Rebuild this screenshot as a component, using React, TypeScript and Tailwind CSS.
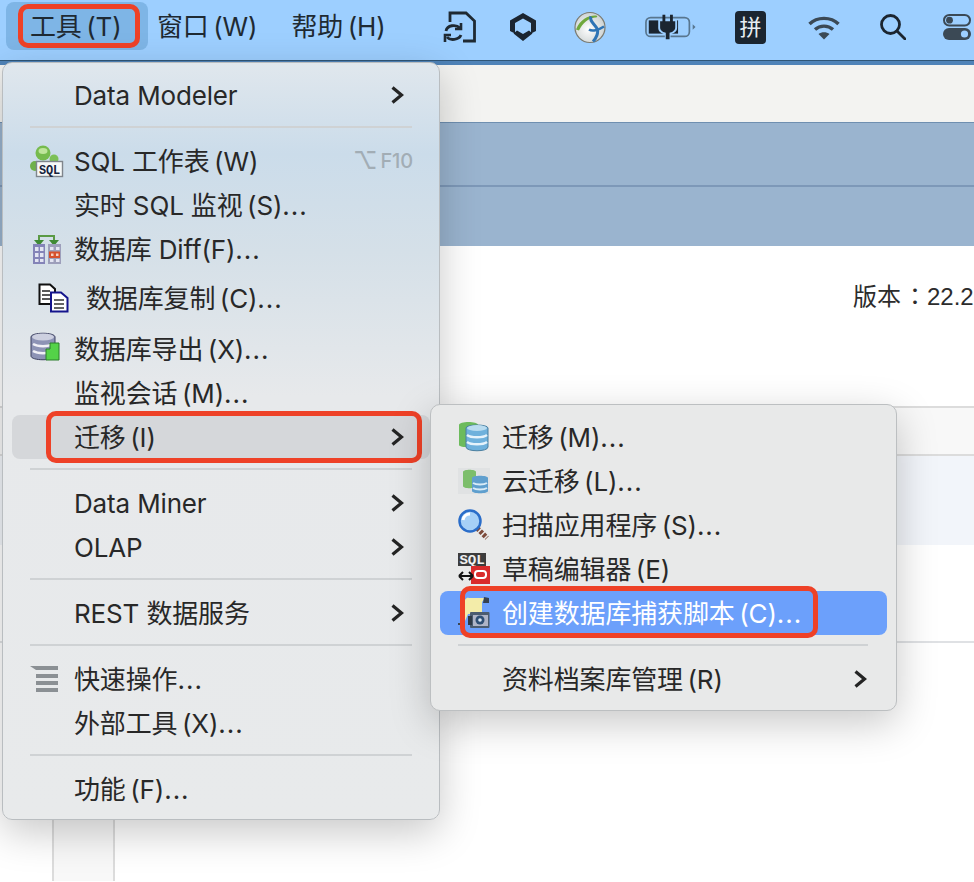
import React from "react";

const font = "font-['Inter','Noto_Sans_CJK_SC',sans-serif]";
const thin = "\u2009";

function Chevron() {
  return (
    <svg width="14" height="20" viewBox="0 0 14 20" fill="none" className="shrink-0">
      <path d="M2.5 2.5 L11.5 10 L2.5 17.5" stroke="#242424" strokeWidth="3.2" strokeLinejoin="miter" />
    </svg>
  );
}

function Sep({ cls }: { cls: string }) {
  return (
    <div className="h-[22px] pt-[9px]">
      <div className={`h-[2px] bg-[#cfd2d4] ${cls}`} />
    </div>
  );
}

function SqlIcon() {
  return (
    <svg width="34" height="34" viewBox="0 0 34 34">
      <circle cx="13" cy="9" r="7.5" fill="#76bb4e" />
      <ellipse cx="13" cy="7" rx="4.5" ry="3" fill="#bfe59c" />
      <circle cx="24" cy="15" r="4.5" fill="#7cc056" />
      <circle cx="5" cy="22" r="5" fill="#6fb04a" />
      <rect x="6.5" y="17.5" width="26" height="15" fill="#f6f8f8" stroke="#7f858c" strokeWidth="1.4" />
      <text x="19.5" y="29.5" fontSize="13" fontWeight="700" fontFamily="Liberation Mono, monospace" textAnchor="middle" fill="#16233c" textLength="21" lengthAdjust="spacingAndGlyphs">SQL</text>
    </svg>
  );
}

function DiffIcon() {
  return (
    <svg width="30" height="32" viewBox="0 0 30 32">
      <path d="M7 8 V3 H22 V8" fill="none" stroke="#5b9a45" strokeWidth="2" />
      <path d="M2 7 H12 L7 13 Z" fill="#3f8a35" />
      <path d="M17 7 H27 L22 13 Z" fill="#3f8a35" />
      <rect x="1" y="11" width="12" height="20" fill="#8484b8" />
      <rect x="16" y="11" width="13" height="20" fill="#9d9fbb" />
      <g fill="#e3e5f2">
        <rect x="3" y="14" width="3.5" height="4" /><rect x="8" y="14" width="3.5" height="4" />
        <rect x="3" y="20" width="3.5" height="4" /><rect x="8" y="20" width="3.5" height="4" />
        <rect x="3" y="26" width="3.5" height="3" /><rect x="8" y="26" width="3.5" height="3" />
        <rect x="18" y="14" width="3.5" height="3" /><rect x="24" y="14" width="3.5" height="3" />
        <rect x="18" y="26" width="3.5" height="3" /><rect x="24" y="26" width="3.5" height="3" />
      </g>
      <rect x="17" y="18.5" width="11" height="6.5" fill="#d6502d" />
      <rect x="19" y="20.5" width="2.5" height="2.5" fill="#f3d0c4" /><rect x="24" y="20.5" width="2.5" height="2.5" fill="#f3d0c4" />
    </svg>
  );
}

function CopyIcon() {
  return (
    <svg width="32" height="30" viewBox="0 0 32 30">
      <path d="M1.5 1.5 H12 L17 6 V21 H1.5 Z" fill="#fff" stroke="#111" strokeWidth="2" />
      <path d="M4 8 H12 M4 12 H12 M4 16 H12" stroke="#222" strokeWidth="1.4" />
      <path d="M13 9.5 H23 L29.5 15 V28.5 H13 Z" fill="#fff" stroke="#14148c" strokeWidth="2" />
      <path d="M16 17 H26 M16 21 H26 M16 25 H26" stroke="#333" strokeWidth="1.4" />
    </svg>
  );
}

function ExportIcon() {
  return (
    <svg width="32" height="32" viewBox="0 0 32 32">
      <path d="M1 5 C1 0 25 0 25 5 V24 C25 29 1 29 1 24 Z" fill="#8d93b5" stroke="#3d4160" strokeWidth="1" />
      <ellipse cx="13" cy="5" rx="11" ry="3.5" fill="#cdd0e0" />
      <path d="M3 12 C8 15 18 15 23 12 M3 19 C8 22 18 22 23 19" stroke="#f0f0f6" strokeWidth="2.5" fill="none" />
      <path d="M16 17 H20 V11 L29 11 V28 H16 Z" fill="#54d348" stroke="#2a7f2a" strokeWidth="1" />
    </svg>
  );
}

function DbIcon({ size }: { size: number }) {
  return (
    <svg width={size} height={size} viewBox="0 0 32 32">
      <path d="M1 4 C1 0 20 0 20 4 V24 C20 27 1 27 1 24 Z" fill="#6cbb5c" />
      <path d="M8 7 C8 3 30 3 30 7 V26 C30 31 8 31 8 26 Z" fill="#6fb1dc" stroke="#4b7f9f" strokeWidth="1" />
      <ellipse cx="19" cy="7" rx="10" ry="3" fill="#b9dcf0" />
      <path d="M9 14 C13 17 25 17 29 14 M9 21 C13 24 25 24 29 21" stroke="#e6f3fb" strokeWidth="2.5" fill="none" />
    </svg>
  );
}

function CloudDbIcon() {
  return (
    <svg width="32" height="26" viewBox="0 0 32 26">
      <rect x="0" y="0" width="32" height="26" fill="#e0e2e3" />
      <path d="M5 4 C5 1 18 1 18 4 V18 C18 21 5 21 5 18 Z" fill="#7cbe6b" />
      <path d="M14 10 C14 7 30 7 30 10 V23 C30 26 14 26 14 23 Z" fill="#5f9fce" />
      <path d="M15 15 C18 17 26 17 29 15 M15 20 C18 22 26 22 29 20" stroke="#d9ecf7" strokeWidth="2" fill="none" />
    </svg>
  );
}

function LensIcon() {
  return (
    <svg width="32" height="32" viewBox="0 0 32 32">
      <path d="M19 19 L29 29" stroke="#7d4a3a" strokeWidth="5" strokeDasharray="3 1.5" strokeLinecap="butt" />
      <circle cx="12" cy="12" r="10.5" fill="#a6d0f7" stroke="#2a6dc9" strokeWidth="2.5" />
      <path d="M5 11 A7 7 0 0 1 12 5" stroke="#fff" strokeWidth="3" fill="none" />
    </svg>
  );
}

function ScratchIcon() {
  return (
    <svg width="32" height="32" viewBox="0 0 32 32">
      <rect x="0" y="0" width="28" height="13" fill="#3d3d3d" />
      <text x="14" y="11" fontSize="12" fontWeight="700" fontFamily="Liberation Mono, monospace" textAnchor="middle" fill="#f0f0f0" textLength="25" lengthAdjust="spacingAndGlyphs">SQL</text>
      <rect x="13" y="13" width="19" height="18" fill="#d92b2b" />
      <rect x="17" y="18" width="11" height="7" rx="3" fill="none" stroke="#fff" strokeWidth="2" />
      <path d="M1 23 H15 M1 23 L5 19 M1 23 L5 27 M15 23 L11 19 M15 23 L11 27" stroke="#111" strokeWidth="2" fill="none" />
    </svg>
  );
}

function CaptureIcon() {
  return (
    <svg width="32" height="32" viewBox="0 0 32 32">
      <path d="M7 3 C9 0 10 1 11 1 H27 L24 5 V17 H10 L7 24 H4 Z" fill="#f3eca9" />
      <path d="M26 0 L31 1 V6 H25 Z" fill="#35414f" />
      <path d="M0 26 H5 V28 H0 Z" fill="#3b4653" />
      <rect x="12" y="15" width="19.5" height="16" rx="1" fill="#4b5c70" />
      <rect x="10" y="19" width="4" height="9" fill="#2f3a47" />
      <rect x="15" y="18" width="15" height="11" fill="#aeb4c6" />
      <circle cx="22" cy="23" r="4.5" fill="#2f4f74" />
      <circle cx="22" cy="23" r="1.8" fill="#d8e6f4" />
    </svg>
  );
}

function QuickIcon() {
  return (
    <svg width="30" height="28" viewBox="0 0 30 28">
      <g fill="#8b9094">
        <path d="M0 1 H28 V5 H6 Z" />
        <rect x="6" y="9" width="22" height="4" />
        <rect x="6" y="16" width="22" height="4" />
        <rect x="6" y="23" width="22" height="4" />
      </g>
    </svg>
  );
}

function FileSync() {
  return (
    <svg width="34" height="32" viewBox="0 0 34 32" fill="none" stroke="#1f2a33" strokeWidth="2.8">
      <path d="M7 11 V2 H23 L31.5 10 V30 H20" />
      <path d="M3 20 C4 14 13 13 17 17" />
      <path d="M18 12 V18 H12" strokeWidth="2.6" />
      <path d="M18 24 C16 29 7 30 4 26" />
      <path d="M2 31 V24 H8" strokeWidth="2.6" />
    </svg>
  );
}

function HexIcon() {
  return (
    <svg width="26" height="28" viewBox="0 0 26 28" fill="#1b2530">
      <path d="M13 0 L26 7.5 V18 L21 20.5 V10 L13 5.5 L5 10 V20.5 L0 18 V7.5 Z" />
      <path d="M7 17.5 L13 21 L19 17.5 L22.5 20.5 L13 28 L3.5 20.5 Z" />
    </svg>
  );
}

function GlobeIcon() {
  return (
    <svg width="32" height="33" viewBox="0 0 32 32">
      <defs>
        <radialGradient id="gl" cx="0.45" cy="0.55" r="0.6">
          <stop offset="0" stopColor="#ffffff" />
          <stop offset="1" stopColor="#c9cfcf" />
        </radialGradient>
      </defs>
      <circle cx="16" cy="16" r="15" fill="url(#gl)" stroke="#7a7a70" strokeWidth="1.2" />
      <path d="M2 18 C6 8 14 4 21 4 C24 4 24 6 21 6 C14 7 9 11 5 19 Z" fill="#6fa83c" />
      <path d="M17 5 C15 9 20 12 23 17 C25 21 22 27 19 30" fill="none" stroke="#2e74b5" strokeWidth="3" />
      <path d="M15 18 C18 20 24 19 30 15" fill="none" stroke="#2e74b5" strokeWidth="2.5" />
    </svg>
  );
}

function BatteryIcon() {
  return (
    <svg width="51" height="26" viewBox="0 0 54 26">
      <rect x="1" y="3" width="46" height="20" rx="5" fill="none" stroke="#58768f" strokeWidth="1.8" />
      <path d="M4 6 H35 V20 H4 Z" fill="#1b2530" />
      <path d="M50.5 10 L53.5 13 L50.5 16 Z" fill="#58768f" />
      <path d="M14 5 H34 V14 C34 18 30 20 27 20.5 V26 H21 V20.5 C18 20 14 18 14 14 Z" fill="#9dcfff" />
      <path d="M16 7 H32 V13.5 C32 17 28 19 26 19 V26 H22 V19 C20 19 16 17 16 13.5 Z" fill="#1b2530" />
      <rect x="18.5" y="0" width="3" height="8" fill="#1b2530" />
      <rect x="26.5" y="0" width="3" height="8" fill="#1b2530" />
    </svg>
  );
}

function WifiIcon() {
  return (
    <svg width="32" height="25" viewBox="0 0 32 25" fill="none" stroke="#3b4955" strokeWidth="3.4">
      <path d="M1.5 9 C9 1.5 23 1.5 30.5 9" />
      <path d="M7 14.5 C12 10 20 10 25 14.5" />
      <path d="M16 24.5 L10.5 19 C13.5 16.8 18.5 16.8 21.5 19 Z" fill="#3b4955" stroke="none" />
    </svg>
  );
}

function SearchIcon() {
  return (
    <svg width="26" height="26" viewBox="0 0 26 26" fill="none" stroke="#1b2530" strokeWidth="2.8">
      <circle cx="10.5" cy="10.5" r="9" />
      <path d="M17 17 L25 25" strokeLinecap="round" />
    </svg>
  );
}

function ToggleIcon() {
  return (
    <svg width="28" height="26" viewBox="0 0 28 26">
      <rect x="1" y="1" width="26" height="10.5" rx="5.25" fill="none" stroke="#3b4955" strokeWidth="2" />
      <circle cx="6.5" cy="6.2" r="3.4" fill="#3b4955" />
      <rect x="0" y="14" width="28" height="12" rx="6" fill="#3b4955" />
      <circle cx="21.5" cy="20" r="3.6" fill="#9dcfff" />
    </svg>
  );
}

type RowProps = {
  icon?: React.ReactNode;
  text: string;
  chevron?: boolean;
  shortcut?: React.ReactNode;
  textCls?: string;
  rowCls?: string;
  iconCls?: string;
  children?: React.ReactNode;
};

function Row({ icon, text, chevron, shortcut, textCls = "", rowCls = "h-11 pr-[26px]", iconCls = "left-[18px]", children }: RowProps) {
  const dots = text.endsWith("...");
  return (
    <div className={`relative flex items-center pl-[62px] rounded-lg ${rowCls}`}>
      {icon && <span className={`absolute top-1/2 -translate-y-1/2 flex ${iconCls}`}>{icon}</span>}
      <span className={`flex-1 whitespace-nowrap ${textCls}`}>
        {dots ? text.slice(0, -3) : text}
        {dots && <span className="tracking-[1px]">...</span>}
      </span>
      {shortcut}
      {chevron && <Chevron />}
      {children}
    </div>
  );
}

function MainMenu() {
  return (
    <div className="absolute left-[2px] top-[62px] w-[438px] h-[758px] rounded-[10px] border border-[#b9bdc0] shadow-[0_12px_40px_rgba(0,0,0,0.22)] pt-[10px] px-[9px] bg-[linear-gradient(180deg,#e0e7ed_0%,#cbdcea_12%,#d5e0e8_25%,#e7e9eb_44%,#e8eaeb_100%)]">
      <Row text="Data Modeler" chevron />
      <Sep cls="ml-[18px] w-[382px]" />
      <Row
        text={`SQL 工作表${thin}(W)`}
        icon={<SqlIcon />}
        shortcut={
          <span className="absolute right-[17px] flex items-center text-[#a2adb5] font-medium">
            <span className="text-[24px] leading-none">⌥</span>
            <span className="text-[20px] leading-none ml-[3px]">F10</span>
          </span>
        }
      />
      <Row text={`实时 SQL 监视${thin}(S)...`} />
      <Row text="数据库 Diff(F)..." icon={<DiffIcon />} iconCls="left-[20px]" />
      <Row text={`数据库复制${thin}(C)...`} icon={<CopyIcon />} iconCls="left-[26px]" rowCls="h-[54px]" textCls="pl-[12px]" />
      <Row text={`数据库导出${thin}(X)...`} icon={<ExportIcon />} rowCls="h-[46px] pt-[2px]" />
      <Row text={`监视会话${thin}(M)...`} />
      <Row text={`迁移${thin}(I)`} chevron rowCls="h-11 pr-[26px] bg-[#d5d7da]">
        <div className="absolute left-[34px] top-[-4px] w-[376px] h-[52px] rounded-[10px] border-[5px] border-[#ee4127]" />
      </Row>
      <Sep cls="ml-[18px] w-[382px]" />
      <Row text="Data Miner" chevron />
      <Row text="OLAP" chevron />
      <Sep cls="ml-[18px] w-[382px]" />
      <Row text="REST 数据服务" chevron />
      <Sep cls="ml-[18px] w-[382px]" />
      <Row text="快速操作..." icon={<QuickIcon />} />
      <Row text={`外部工具${thin}(X)...`} />
      <Sep cls="ml-[18px] w-[382px]" />
      <Row text={`功能${thin}(F)...`} />
    </div>
  );
}

function SubMenu() {
  return (
    <div className="absolute left-[430px] top-[404px] w-[467px] h-[307px] rounded-[10px] border border-[#bcbfc1] shadow-[0_12px_40px_rgba(0,0,0,0.22)] bg-[#e8e9e9] pt-[10px] px-[9px]">
      <Row text={`迁移${thin}(M)...`} icon={<DbIcon size={32} />} />
      <Row text={`云迁移${thin}(L)...`} icon={<CloudDbIcon />} />
      <Row text={`扫描应用程序${thin}(S)...`} icon={<LensIcon />} />
      <Row text={`草稿编辑器${thin}(E)`} icon={<ScratchIcon />} />
      <Row text={`创建数据库捕获脚本${thin}(C)...`} icon={<CaptureIcon />} rowCls="h-11 pr-[26px] bg-[#6ca0fb]" textCls="text-white">
        <div className="absolute left-[20px] top-[-5px] w-[358px] h-[52px] rounded-[10px] border-[5px] border-[#ee4127]" />
      </Row>
      <Sep cls="ml-[18px] w-[410px]" />
      <Row text={`资料档案库管理${thin}(R)`} chevron rowCls="h-11 pr-[20px]" />
    </div>
  );
}

export default function App() {
  return (
    <div className={`relative w-[974px] h-[882px] overflow-hidden bg-white text-[26px] tracking-[-0.15px] text-[#282828] ${font}`}>
      <header className="flex items-center h-[60px] bg-[#9dcfff] text-[#1f2a33]">
        <div className="relative ml-[6px] mb-[8px] w-[142px] h-[48px] rounded-lg bg-[#7eb5e6] flex items-center pl-[24px] whitespace-nowrap">
          {`工具${thin}(T)`}
          <div className="absolute left-[12px] top-[2px] w-[122px] h-[44px] rounded-[10px] border-[5px] border-[#ee4127]" />
        </div>
        <span className="ml-[9px] mb-[8px] whitespace-nowrap">{`窗口${thin}(W)`}</span>
        <span className="ml-[34px] mb-[8px] whitespace-nowrap">{`帮助${thin}(H)`}</span>
        <div className="ml-auto mb-[6px] pr-[3px] flex items-center">
          <span className="flex"><FileSync /></span>
          <span className="flex ml-[33px]"><HexIcon /></span>
          <span className="flex ml-[38px]"><GlobeIcon /></span>
          <span className="flex ml-[39px]"><BatteryIcon /></span>
          <span className="ml-[39px] w-[31px] h-[33px] rounded-[4px] bg-[#1b2530] text-[#e8eef3] text-[22px] leading-[33px] text-center">拼</span>
          <span className="flex ml-[42px]"><WifiIcon /></span>
          <span className="flex ml-[40px]"><SearchIcon /></span>
          <span className="flex ml-[37px]"><ToggleIcon /></span>
        </div>
      </header>
      <div className="h-[5px] border-t border-[#2f5678] bg-[#4f83b8]" />
      <div className="h-[57px] bg-[#f3f3f1]" />
      <div className="h-[65px] bg-[#9ab4cf] border-t border-[#6f8fb0] border-b-2 border-b-[#7d98b8]" />
      <div className="h-[59px] bg-[#9ab4cf]" />
      <div className="h-[160px] pt-[34px] pl-[853px] whitespace-nowrap text-[24px] leading-[30px] tracking-normal text-[#2c2c2c] font-['Liberation_Sans','Noto_Sans_CJK_SC',sans-serif]">
        版本<span className="ml-[2px] font-['Noto_Sans_CJK_TC',sans-serif]">：</span>22.2.1.131
      </div>
      <div className="h-[50px] bg-[#f8f8f8] border-y-2 border-[#dcdcdc]" />
      <div className="h-[89px] bg-[#f2f5fa]" />
      <div className="h-[98px] border-b-2 border-[#dfe1e4]" />
      <div className="ml-[52px] w-[63px] h-[238px] border-x-2 border-[#dcdcdc] bg-[#f8f8f8]" />
      <MainMenu />
      <SubMenu />
    </div>
  );
}
